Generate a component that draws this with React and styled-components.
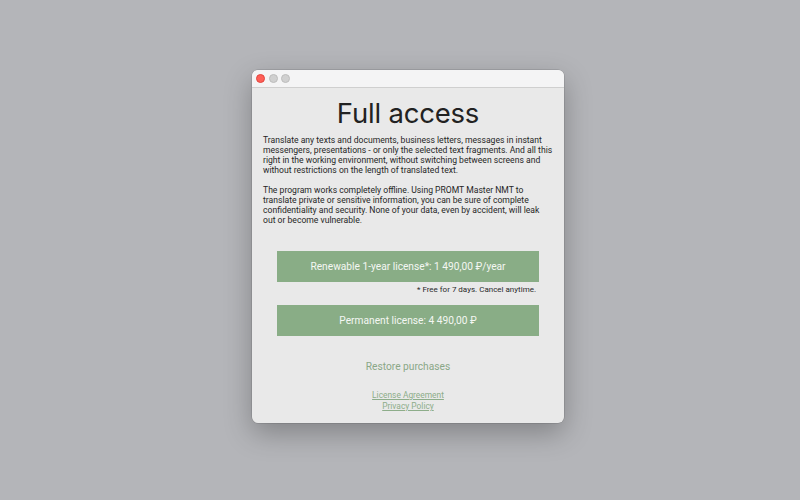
import React from "react";
import styled, { createGlobalStyle } from "styled-components";

const Global = createGlobalStyle`
  html, body { margin: 0; padding: 0; }
  body {
    background: #b4b5b9;
    font-family: Roboto, "Noto Sans", sans-serif;
    width: 800px;
    height: 500px;
    overflow: hidden;
  }
`;

const Stage = styled.div`
  padding: 70px 0 0 252px;
`;

const Window = styled.div`
  width: 312px;
  height: 353px;
  border-radius: 6px;
  background: #e9e9e9;
  box-shadow: 0 10px 28px rgba(0, 0, 0, 0.28), 0 0 0 0.5px rgba(0, 0, 0, 0.18);
  overflow: hidden;
  display: flex;
  flex-direction: column;
`;

const TitleBar = styled.div`
  height: 17px;
  background: #f4f4f5;
  border-bottom: 1px solid #cfcfcf;
  display: flex;
  align-items: center;
  gap: 3.5px;
  padding-left: 4px;
`;

const Light = styled.span`
  box-sizing: border-box;
  width: 9px;
  height: 9px;
  border-radius: 50%;
  background: ${(p) => p.$color};
  border: 0.5px solid ${(p) => p.$edge};
`;

const Content = styled.div`
  flex: 1;
  display: flex;
  flex-direction: column;
  align-items: center;
  padding: 0 11px;
`;

const Title = styled.h1`
  margin: 7px 0 0;
  font-family: Inter, Roboto, sans-serif;
  font-size: 27.5px;
  font-weight: 400;
  line-height: 36px;
  color: #222;
  letter-spacing: -0.2px;
`;

const Paragraph = styled.p`
  align-self: stretch;
  margin: ${(p) => p.$top}px 0 0;
  font-size: 8.6px;
  line-height: 10px;
  color: #262626;
  white-space: nowrap;
`;

const BuyButton = styled.button`
  width: 262px;
  height: 31px;
  margin-top: ${(p) => p.$top}px;
  border: none;
  background: #89ad86;
  color: #f4f7f3;
  font-family: inherit;
  font-size: 10.2px;
  padding: 0;
  cursor: pointer;
`;

const Note = styled.div`
  width: 262px;
  text-align: right;
  margin-top: 3px;
  padding-right: 3px;
  box-sizing: border-box;
  font-size: 8px;
  line-height: 9px;
  color: #2a2a2a;
`;

const Restore = styled.div`
  margin-top: 25px;
  font-size: 10.2px;
  color: #8aa787;
`;

const Links = styled.div`
  margin-top: 18px;
  display: flex;
  flex-direction: column;
  align-items: center;
`;

const LinkText = styled.a`
  font-size: 8.4px;
  line-height: 11px;
  color: #8dad8a;
  text-decoration: underline;
`;

export default function App() {
  return (
    <>
      <Global />
      <Stage>
        <Window>
          <TitleBar>
            <Light $color="#fe5f57" $edge="#e2463f" />
            <Light $color="#d0d0d0" $edge="#bdbdbd" />
            <Light $color="#d0d0d0" $edge="#bdbdbd" />
          </TitleBar>
          <Content>
            <Title>Full access</Title>
            <Paragraph $top={4}>
              Translate any texts and documents, business letters, messages in instant
              <br />
              messengers, presentations - or only the selected text fragments. And all this
              <br />
              right in the working environment, without switching between screens and
              <br />
              without restrictions on the length of translated text.
            </Paragraph>
            <Paragraph $top={10}>
              The program works completely offline. Using PROMT Master NMT to
              <br />
              translate private or sensitive information, you can be sure of complete
              <br />
              confidentiality and security. None of your data, even by accident, will leak
              <br />
              out or become vulnerable.
            </Paragraph>
            <BuyButton $top={26}>Renewable 1-year license*: 1 490,00 ₽/year</BuyButton>
            <Note>* Free for 7 days. Cancel anytime.</Note>
            <BuyButton $top={11}>Permanent license: 4 490,00 ₽</BuyButton>
            <Restore>Restore purchases</Restore>
            <Links>
              <LinkText>License Agreement</LinkText>
              <LinkText>Privacy Policy</LinkText>
            </Links>
          </Content>
        </Window>
      </Stage>
    </>
  );
}
